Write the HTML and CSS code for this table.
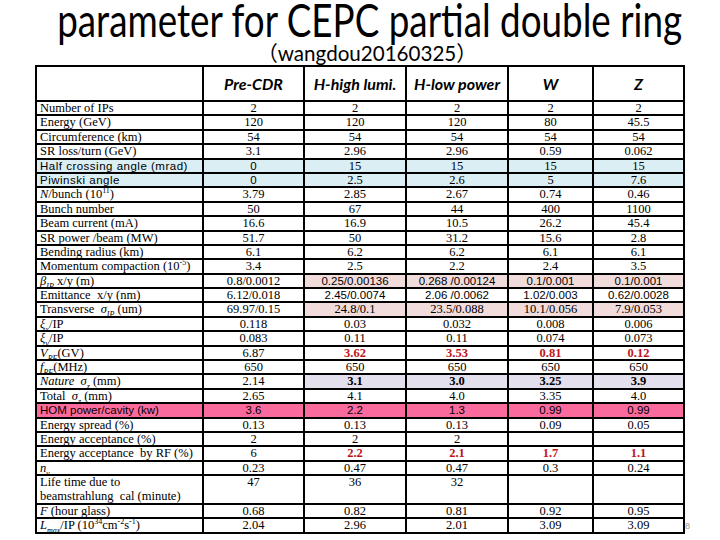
FILE: index.html
```html
<!DOCTYPE html>
<html>
<head>
<meta charset="utf-8">
<link rel="stylesheet" href="styles.css">
</head>
<body>
<div class="slide">
  <div class="title"><span class="title-text">parameter for CEPC partial double ring</span></div>
  <div class="subtitle"><span class="sub-text">（wangdou20160325）</span></div>
  <div class="table">
    <div class="row head">
      <div class="c"></div><div class="c h">Pre-CDR</div><div class="c h">H-high lumi.</div><div class="c h">H-low power</div><div class="c h">W</div><div class="c h">Z</div>
    </div>
    <div class="row"><div class="c l">Number of IPs</div><div class="c">2</div><div class="c">2</div><div class="c">2</div><div class="c">2</div><div class="c">2</div></div>
    <div class="row"><div class="c l">Energy (GeV)</div><div class="c">120</div><div class="c">120</div><div class="c">120</div><div class="c">80</div><div class="c">45.5</div></div>
    <div class="row"><div class="c l">Circumference (km)</div><div class="c">54</div><div class="c">54</div><div class="c">54</div><div class="c">54</div><div class="c">54</div></div>
    <div class="row"><div class="c l">SR loss/turn (GeV)</div><div class="c">3.1</div><div class="c">2.96</div><div class="c">2.96</div><div class="c">0.59</div><div class="c">0.062</div></div>
    <div class="row blue"><div class="c l wide">Half crossing angle (mrad)</div><div class="c sans">0</div><div class="c">15</div><div class="c">15</div><div class="c">15</div><div class="c">15</div></div>
    <div class="row blue"><div class="c l wide">Piwinski angle</div><div class="c sans">0</div><div class="c">2.5</div><div class="c">2.6</div><div class="c">5</div><div class="c">7.6</div></div>
    <div class="row"><div class="c l"><i>N</i>/bunch (10<sup>11</sup>)</div><div class="c">3.79</div><div class="c">2.85</div><div class="c">2.67</div><div class="c">0.74</div><div class="c">0.46</div></div>
    <div class="row"><div class="c l">Bunch number</div><div class="c">50</div><div class="c">67</div><div class="c">44</div><div class="c">400</div><div class="c">1100</div></div>
    <div class="row"><div class="c l">Beam current (mA)</div><div class="c">16.6</div><div class="c">16.9</div><div class="c">10.5</div><div class="c">26.2</div><div class="c">45.4</div></div>
    <div class="row"><div class="c l">SR power /beam (MW)</div><div class="c">51.7</div><div class="c">50</div><div class="c">31.2</div><div class="c">15.6</div><div class="c">2.8</div></div>
    <div class="row"><div class="c l">Bending radius (km)</div><div class="c">6.1</div><div class="c">6.2</div><div class="c">6.2</div><div class="c">6.1</div><div class="c">6.1</div></div>
    <div class="row"><div class="c l">Momentum compaction (10<sup>-5</sup>)</div><div class="c">3.4</div><div class="c">2.5</div><div class="c">2.2</div><div class="c">2.4</div><div class="c">3.5</div></div>
    <div class="row"><div class="c l"><i>β<sub>IP</sub></i> x/y (m)</div><div class="c">0.8/0.0012</div><div class="c sans pink">0.25/0.00136</div><div class="c sans pink">0.268 /0.00124</div><div class="c sans pink">0.1/0.001</div><div class="c sans pink">0.1/0.001</div></div>
    <div class="row"><div class="c l">Emittance&nbsp; x/y (nm)</div><div class="c">6.12/0.018</div><div class="c sans">2.45/0.0074</div><div class="c sans">2.06 /0.0062</div><div class="c sans">1.02/0.003</div><div class="c sans">0.62/0.0028</div></div>
    <div class="row"><div class="c l">Transverse&nbsp; <i>σ<sub>IP</sub></i> (um)</div><div class="c">69.97/0.15</div><div class="c pink">24.8/0.1</div><div class="c pink">23.5/0.088</div><div class="c pink">10.1/0.056</div><div class="c pink">7.9/0.053</div></div>
    <div class="row"><div class="c l"><i>ξ<sub>x</sub></i>/IP</div><div class="c">0.118</div><div class="c">0.03</div><div class="c">0.032</div><div class="c">0.008</div><div class="c">0.006</div></div>
    <div class="row"><div class="c l"><i>ξ<sub>y</sub></i>/IP</div><div class="c">0.083</div><div class="c">0.11</div><div class="c">0.11</div><div class="c">0.074</div><div class="c">0.073</div></div>
    <div class="row"><div class="c l"><i>V<sub>RF</sub></i>(GV)</div><div class="c">6.87</div><div class="c red">3.62</div><div class="c red">3.53</div><div class="c red">0.81</div><div class="c red">0.12</div></div>
    <div class="row"><div class="c l"><i>f<sub>RF</sub></i>(MHz)</div><div class="c">650</div><div class="c">650</div><div class="c">650</div><div class="c">650</div><div class="c">650</div></div>
    <div class="row"><div class="c l"><i>Nature</i>&nbsp; <i>σ<sub>z</sub></i> (mm)</div><div class="c">2.14</div><div class="c lav">3.1</div><div class="c lav">3.0</div><div class="c lav">3.25</div><div class="c lav">3.9</div></div>
    <div class="row"><div class="c l">Total&nbsp; <i>σ<sub>z</sub></i> (mm)</div><div class="c">2.65</div><div class="c">4.1</div><div class="c">4.0</div><div class="c">3.35</div><div class="c">4.0</div></div>
    <div class="row hom"><div class="c l sans">HOM power/cavity (kw)</div><div class="c sans">3.6</div><div class="c sans">2.2</div><div class="c sans">1.3</div><div class="c sans">0.99</div><div class="c sans">0.99</div></div>
    <div class="row"><div class="c l">Energy spread (%)</div><div class="c">0.13</div><div class="c">0.13</div><div class="c">0.13</div><div class="c">0.09</div><div class="c">0.05</div></div>
    <div class="row"><div class="c l">Energy acceptance (%)</div><div class="c">2</div><div class="c">2</div><div class="c">2</div><div class="c"></div><div class="c"></div></div>
    <div class="row"><div class="c l">Energy acceptance&nbsp; by RF (%)</div><div class="c">6</div><div class="c red">2.2</div><div class="c red">2.1</div><div class="c red">1.7</div><div class="c red">1.1</div></div>
    <div class="row"><div class="c l"><i>n<sub>γ</sub></i></div><div class="c">0.23</div><div class="c">0.47</div><div class="c">0.47</div><div class="c">0.3</div><div class="c">0.24</div></div>
    <div class="row tall"><div class="c l">Life time due to<br>beamstrahlung&nbsp; cal (minute)</div><div class="c">47</div><div class="c">36</div><div class="c">32</div><div class="c"></div><div class="c"></div></div>
    <div class="row"><div class="c l"><i>F</i> (hour glass)</div><div class="c">0.68</div><div class="c">0.82</div><div class="c">0.81</div><div class="c">0.92</div><div class="c">0.95</div></div>
    <div class="row"><div class="c l"><i>L<sub>max</sub></i>/IP (10<sup>34</sup>cm<sup>-2</sup>s<sup>-1</sup>)</div><div class="c">2.04</div><div class="c">2.96</div><div class="c">2.01</div><div class="c">3.09</div><div class="c">3.09<span class="pagenum">8</span></div></div>
  </div>
</div>
</body>
</html>
```
FILE: styles.css
```css
html, body {
  margin: 0;
  padding: 0;
  background: #ffffff;
}
.slide {
  width: 720px;
  height: 540px;
  overflow: hidden;
  position: relative;
}
.title {
  height: 43px;
  display: flex;
  justify-content: center;
  padding-left: 20px;
  white-space: nowrap;
}
.title-text {
  display: block;
  flex: none;
  white-space: nowrap;
  font-family: "Lato", "Open Sans", sans-serif;
  font-size: 46px;
  line-height: 46px;
  color: #000;
  transform: scaleX(0.8);
  transform-origin: center;
  margin-top: -3px;
}
.subtitle {
  height: 22px;
  display: flex;
  justify-content: center;
  padding-left: 14px;
  white-space: nowrap;
}
.sub-text {
  display: block;
  flex: none;
  font-family: "Lato", "Noto Sans CJK SC", sans-serif;
  font-size: 21px;
  line-height: 20px;
  color: #000;
  transform: scaleX(0.98);
}
.table {
  margin-left: 35px;
  width: 646px;
  background: #000;
  padding: 2px;
  display: flex;
  flex-direction: column;
  gap: 2px;
}
.row {
  display: grid;
  grid-template-columns: 165px 99px 100px 100px 83px 89px;
  column-gap: 2px;
  height: 12.4px;
}
.row.head {
  height: 33px;
}
.row.tall {
  height: 26.8px;
}
.c {
  background: #ffffff;
  font-family: "Liberation Serif", serif;
  font-size: 12.5px;
  line-height: 12.4px;
  text-align: center;
  color: #000;
  white-space: nowrap;
  overflow: visible;
  position: relative;
}
.c.l {
  text-align: left;
  padding-left: 3px;
}
.row.tall .c {
  line-height: 13.4px;
}
.c.h {
  font-family: "Lato", "Open Sans", sans-serif;
  font-weight: bold;
  font-style: italic;
  font-size: 16px;
  line-height: 33px;
}
.c.sans {
  font-family: "Liberation Sans", sans-serif;
  font-size: 11.5px;
}
.c.wide {
  font-family: "Liberation Sans", sans-serif;
  font-size: 11.5px;
  letter-spacing: 0.5px;
}
.row.blue .c {
  background: #dbeef3;
}
.row.hom .c {
  background: #fb6a9c;
}
.c.pink {
  background: #f2dcdb;
}
.c.lav {
  background: #e4dfec;
  font-weight: bold;
}
.c.red {
  color: #c0141c;
  font-weight: bold;
}
sub, sup {
  font-size: 8px;
  line-height: 0;
}
.pagenum {
  position: absolute;
  right: -7px;
  top: 1px;
  font-family: "Liberation Sans", sans-serif;
  font-size: 9px;
  color: #999;
}
```
